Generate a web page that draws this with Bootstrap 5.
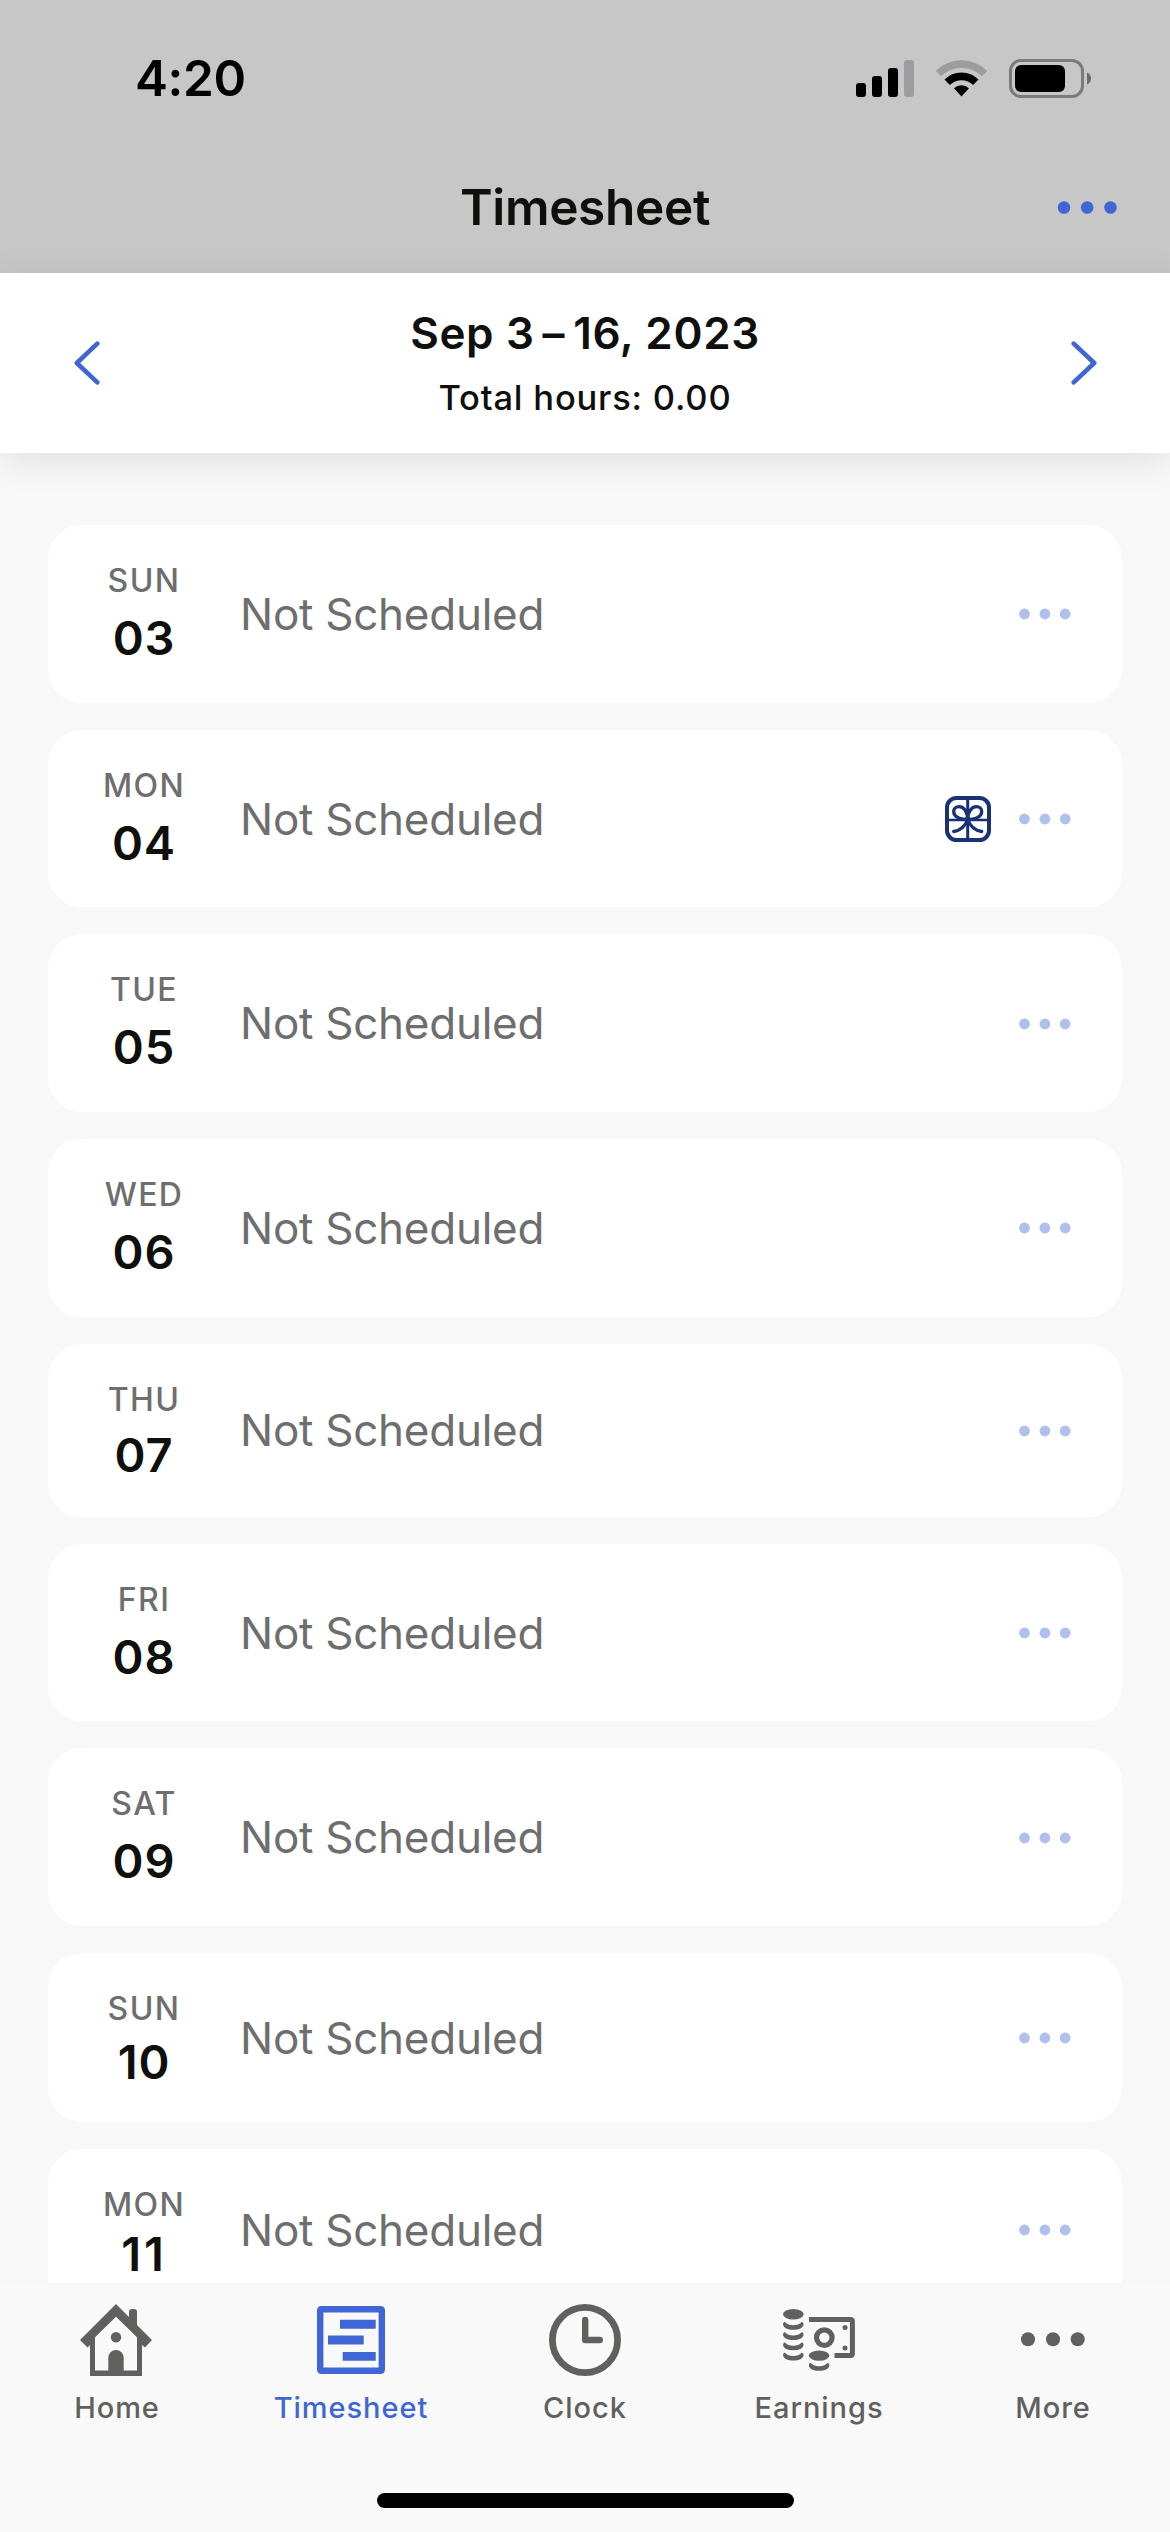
<!DOCTYPE html>
<html lang="en">
<head>
<meta charset="utf-8">
<meta name="viewport" content="width=device-width, initial-scale=1">
<title>Timesheet</title>
<link href="https://cdn.jsdelivr.net/npm/bootstrap@5.3.0/dist/css/bootstrap.min.css" rel="stylesheet">
<style>
  :root { --ink: #0f0f0e; --muted: #6e6e6e; --brand: #4066d5; --tab: #60605e; }
  body { font-family: Inter, "Liberation Sans", sans-serif; color: var(--ink); background: #f8f8f8; }
  svg { display: block; flex: none; }
  .app { height: 2532px; }
  .app-head { height: 273px; background: #c7c7c7; }
  .status { height: 156px; padding: 0 78px 0 135px; color: #000; }
  .clock-text { font-size: 49.5px; font-weight: 600; line-height: 60px; letter-spacing: -.36px; }
  .title-row { height: 102px; display: grid; grid-template-columns: 1fr auto 1fr; padding: 0 53px; }
  .title-text { font-size: 49.5px; font-weight: 600; line-height: 60px; letter-spacing: -.31px; }
  .period { height: 180px; padding: 0 73px; box-shadow: 0 7px 35px rgba(0,0,0,.1); z-index: 1; }
  .period-range { font-size: 44px; font-weight: 600; line-height: 56px; letter-spacing: .66px; margin-top: -1px; }
  .period-total { font-size: 34.5px; font-weight: 500; line-height: 44px; margin-top: 15px; letter-spacing: .8px; }
  .days { padding: 72px 48px 0; gap: 27px; min-height: 0; }
  .day-card { border: 0; border-radius: 34px; padding: 36px 51px 36px 0; flex: none; }
  .day-col { width: 192px; }
  .day-name { font-size: 32px; font-weight: 500; line-height: 39px; margin-bottom: 9px; color: var(--muted); letter-spacing: 1.4px; }
  .day-num { font-size: 47px; font-weight: 600; line-height: 57.67px; letter-spacing: .9px; }
  .num-b { line-height: 53px; }
  .num-c { line-height: 49px; }
  .num-d { line-height: 41px; letter-spacing: 3px; }
  .day-text { font-size: 44px; line-height: 54px; color: var(--muted); letter-spacing: -.26px; }
  .day-dots { margin-top: 1px; }
  .gift { margin: 1px 28px 0 0; }
  .tabbar { height: 249px; background: #f9f9f9; z-index: 1; }
  .tab-item { padding: 21px 0 0; color: var(--tab); }
  .tab-item.active { color: var(--brand); }
  .tab-item.active .tab-icon { margin-left: -1px; }
  .tab-icon { height: 72px; }
  .tab-text { font-size: 29px; font-weight: 500; line-height: 36px; margin-top: 14px; letter-spacing: .95px; }
  .home-bar { width: 417px; height: 15px; border-radius: 8px; margin-bottom: 24px; }
</style>
</head>
<body>
<svg width="0" height="0" class="position-absolute" aria-hidden="true">
  <symbol id="dots" viewBox="0 0 52 12"><g fill="#b0c0ec"><circle cx="5.5" cy="6" r="5.4"/><circle cx="25.9" cy="6" r="5.4"/><circle cx="46.2" cy="6" r="5.4"/></g></symbol>
  <symbol id="coin" viewBox="0 0 21 9"><path d="M2 .7Q5 3.9 10.3 3.9Q15.6 3.9 18.6.7Q20.6.3 20.6 3.2C20 6.7 16 8.5 10.3 8.5C4.6 8.5.6 6.7 0 3.2Q0 .3 2 .7Z"/></symbol>
</svg>
<div class="app d-flex flex-column overflow-hidden">
  <header class="app-head flex-shrink-0">
    <div class="status d-flex align-items-center justify-content-between">
      <div class="clock-text">4:20</div>
      <div class="d-flex align-items-center">
        <svg width="59" height="39" viewBox="0 0 59 39"><rect x="0" y="24" width="10" height="14" rx="3"/><rect x="16" y="17" width="10" height="21" rx="3"/><rect x="32" y="9" width="10" height="29" rx="3"/><rect x="48" y="1" width="10" height="37" rx="3" fill="#9d9d9f"/></svg>
        <svg class="ms-3 me-3" width="62" height="39" viewBox="-5 0 62 39"><g fill="none" stroke-width="7.6"><path d="M2.4 14.6A32.9 32.9 0 0 1 48.6 14.6" stroke="#9d9d9f"/><path d="M11.2 23.3A20.2 20.2 0 0 1 39.8 23.3" stroke="#000"/></g><path d="M18 29.2A10.8 10.8 0 0 1 33 29.2L25.5 37.4Z"/></svg>
        <svg width="83" height="39" viewBox="0 0 83 39"><rect x="1.5" y="1.5" width="72" height="36" rx="10.5" fill="none" stroke="#7b7b7b" stroke-width="3"/><rect x="6" y="6" width="50" height="27" rx="6"/><path d="M78 13.5C83.4 15.5 83.4 23.5 78 25.5Z" fill="#6b6b6b"/></svg>
      </div>
    </div>
    <div class="title-row align-items-center">
      <span></span>
      <h1 class="title-text m-0">Timesheet</h1>
      <svg class="ms-auto" width="60" height="13" viewBox="0 0 60 13"><g fill="#4066d5"><circle cx="7" cy="6.5" r="6.3"/><circle cx="30.2" cy="6.5" r="6.3"/><circle cx="53.5" cy="6.5" r="6.3"/></g></svg>
    </div>
  </header>

  <section class="period bg-white d-flex align-items-center justify-content-between position-relative flex-shrink-0">
    <svg width="27" height="44" viewBox="0 0 27 44"><path d="M24.3 2.7L3.8 22L24.3 41.3" fill="none" stroke="#4066d5" stroke-width="4.6" stroke-linecap="round" stroke-linejoin="round"/></svg>
    <div class="text-center">
      <div class="period-range">Sep 3&thinsp;–&thinsp;16, 2023</div>
      <div class="period-total">Total hours: 0.00</div>
    </div>
    <svg width="27" height="44" viewBox="0 0 27 44"><path d="M3.7 2.7L24.2 22L3.7 41.3" fill="none" stroke="#4066d5" stroke-width="4.6" stroke-linecap="round" stroke-linejoin="round"/></svg>
  </section>

  <main class="days d-flex flex-column flex-grow-1 overflow-hidden">
    <div class="card day-card flex-row align-items-center"><div class="day-col text-center"><div class="day-name">SUN</div><div class="day-num">03</div></div><div class="day-text flex-grow-1">Not Scheduled</div><svg class="day-dots" width="52" height="12"><use href="#dots"/></svg></div>
    <div class="card day-card flex-row align-items-center"><div class="day-col text-center"><div class="day-name">MON</div><div class="day-num">04</div></div><div class="day-text flex-grow-1">Not Scheduled</div>
      <svg class="gift" width="46" height="46" viewBox="0 0 46 46"><g fill="none" stroke="#1a3175" stroke-linecap="round"><rect x="2" y="2" width="42" height="42" rx="9.5" stroke-width="4"/><path d="M22.7 3V43" stroke-width="3"/><path d="M3 24H43" stroke-width="2.3"/><path d="M22.7 23.5C13.5 23.5 8.7 20 8.7 15.5C8.7 12.5 11 10.6 14 10.6C19 10.6 22.7 16 22.7 23.5C22.700 16 26.4 10.6 31.4 10.6C34.4 10.6 36.7 12.5 36.7 15.5C36.7 20 31.9 23.5 22.7 23.5M22.7 23.5C20 31 15 34.5 8.7 35.5M22.7 23.5C25.4 31 30.4 34.5 36.7 35.5" stroke-width="3.3"/></g><circle cx="22.7" cy="23.5" r="3" fill="#1a3175"/></svg>
      <svg class="day-dots" width="52" height="12"><use href="#dots"/></svg></div>
    <div class="card day-card flex-row align-items-center"><div class="day-col text-center"><div class="day-name">TUE</div><div class="day-num">05</div></div><div class="day-text flex-grow-1">Not Scheduled</div><svg class="day-dots" width="52" height="12"><use href="#dots"/></svg></div>
    <div class="card day-card flex-row align-items-center"><div class="day-col text-center"><div class="day-name">WED</div><div class="day-num">06</div></div><div class="day-text flex-grow-1">Not Scheduled</div><svg class="day-dots" width="52" height="12"><use href="#dots"/></svg></div>
    <div class="card day-card flex-row align-items-center"><div class="day-col text-center"><div class="day-name">THU</div><div class="day-num num-b">07</div></div><div class="day-text flex-grow-1">Not Scheduled</div><svg class="day-dots" width="52" height="12"><use href="#dots"/></svg></div>
    <div class="card day-card flex-row align-items-center"><div class="day-col text-center"><div class="day-name">FRI</div><div class="day-num">08</div></div><div class="day-text flex-grow-1">Not Scheduled</div><svg class="day-dots" width="52" height="12"><use href="#dots"/></svg></div>
    <div class="card day-card flex-row align-items-center"><div class="day-col text-center"><div class="day-name">SAT</div><div class="day-num">09</div></div><div class="day-text flex-grow-1">Not Scheduled</div><svg class="day-dots" width="52" height="12"><use href="#dots"/></svg></div>
    <div class="card day-card flex-row align-items-center"><div class="day-col text-center"><div class="day-name">SUN</div><div class="day-num num-c">10</div></div><div class="day-text flex-grow-1">Not Scheduled</div><svg class="day-dots" width="52" height="12"><use href="#dots"/></svg></div>
    <div class="card day-card flex-row align-items-center"><div class="day-col text-center"><div class="day-name">MON</div><div class="day-num num-d">11</div></div><div class="day-text flex-grow-1">Not Scheduled</div><svg class="day-dots" width="52" height="12"><use href="#dots"/></svg></div>
  </main>

  <footer class="tabbar d-flex flex-column justify-content-between align-items-center flex-shrink-0">
    <nav class="nav nav-fill w-100">
      <div class="tab-item col text-center">
        <div class="tab-icon d-flex align-items-center justify-content-center"><svg width="74" height="72" viewBox="0 0 74 72" fill="currentColor"><path fill-rule="evenodd" d="M36 0L49 13V8Q49 5 52 5H54Q57 5 57 8V21L72 36L65 43.5L62 41V72H10V41L7.5 43.5L0 36ZM36 12.8L15 33.3V66.5H28.3V54A7.7 8 0 0 1 43.7 54V66.5H57V33.3Z"/><circle cx="36" cy="33.3" r="5.2"/></svg></div>
        <div class="tab-text">Home</div>
      </div>
      <div class="tab-item col text-center active">
        <div class="tab-icon d-flex align-items-center justify-content-center"><svg width="68" height="68" viewBox="0 0 68 68" fill="currentColor"><rect x="3.2" y="3.2" width="61.6" height="61.6" rx="1" fill="none" stroke="currentColor" stroke-width="6.4"/><path d="M23 13.7H58.7V22.7H23ZM11 29.6H46.7V38.4H11ZM25.7 46H58.7V54.7H25.7Z"/></svg></div>
        <div class="tab-text">Timesheet</div>
      </div>
      <div class="tab-item col text-center">
        <div class="tab-icon d-flex align-items-center justify-content-center"><svg width="72" height="72" viewBox="0 0 72 72" fill="none" stroke="currentColor"><circle cx="36" cy="36" r="32.6" stroke-width="6.8"/><path d="M36.2 15.9V36H50.8" stroke-width="6.4" stroke-linecap="round" stroke-linejoin="round"/></svg></div>
        <div class="tab-text">Clock</div>
      </div>
      <div class="tab-item col text-center">
        <div class="tab-icon d-flex align-items-center justify-content-center"><svg width="72" height="72" viewBox="0 0 72 72" fill="currentColor"><ellipse cx="10.3" cy="10.3" rx="10.3" ry="5.2"/><use href="#coin" x="0" y="17.3" width="21" height="9"/><use href="#coin" x="0" y="27.6" width="21" height="9"/><use href="#coin" x="0" y="37.8" width="21" height="9"/><use href="#coin" x="0" y="48" width="21" height="9"/><ellipse cx="36.1" cy="51.6" rx="10.3" ry="5.2"/><use href="#coin" x="25.8" y="58.3" width="21" height="9"/><g fill="none" stroke="currentColor" stroke-width="5"><path d="M26 15.5H67.5Q69.4 15.5 69.4 17.5V49.6Q69.4 51.6 67.5 51.6H51.5"/><circle cx="41.3" cy="33.6" r="7.8" stroke-width="5.2"/></g><circle cx="62" cy="23.4" r="2.5"/><circle cx="62" cy="44" r="2.5"/></svg></div>
        <div class="tab-text">Earnings</div>
      </div>
      <div class="tab-item col text-center">
        <div class="tab-icon d-flex align-items-center justify-content-center"><svg width="64" height="16" viewBox="0 0 64 16" fill="currentColor"><circle cx="7" cy="7.3" r="7"/><circle cx="32" cy="7.3" r="7"/><circle cx="56.7" cy="7.3" r="7"/></svg></div>
        <div class="tab-text">More</div>
      </div>
    </nav>
    <div class="home-bar bg-black"></div>
  </footer>
</div>
<script src="https://cdn.jsdelivr.net/npm/bootstrap@5.3.0/dist/js/bootstrap.bundle.min.js"></script>
</body>
</html>
